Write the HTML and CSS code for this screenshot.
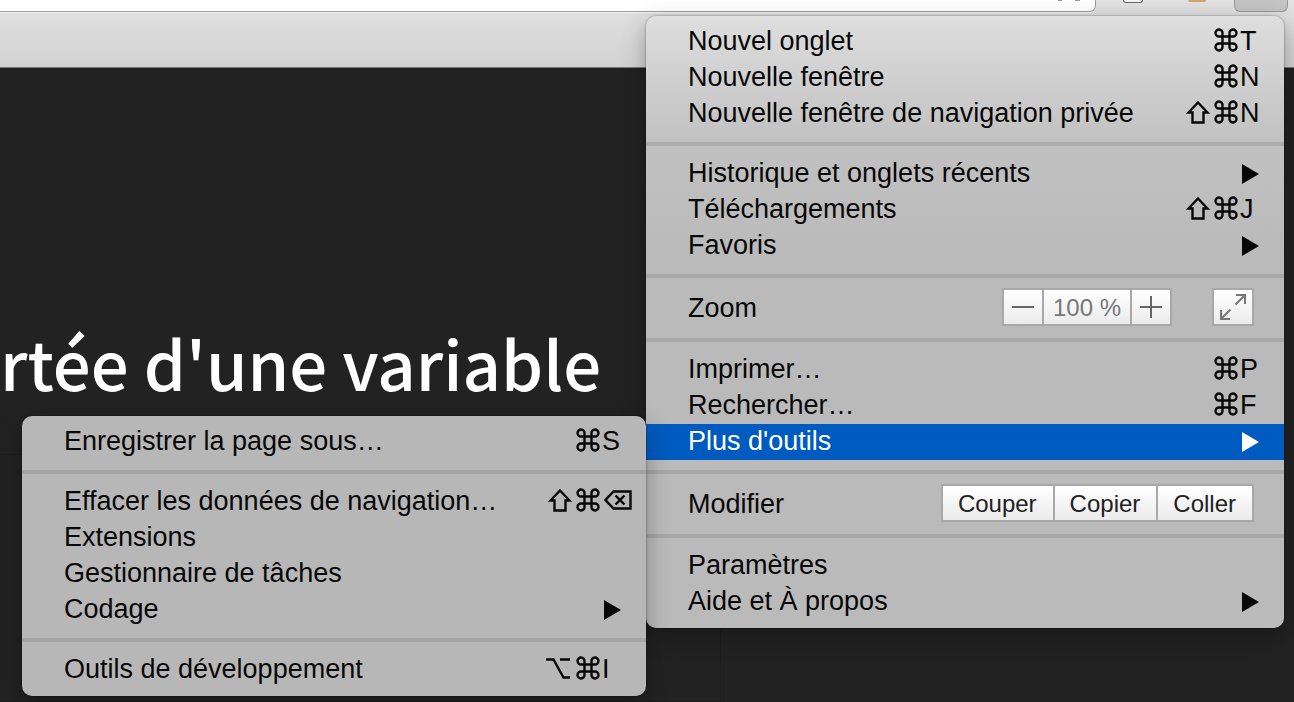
FILE: index.html
```html
<!DOCTYPE html>
<html lang="fr">
<head>
<meta charset="utf-8">
<title>Portée d'une variable</title>
<link rel="stylesheet" href="styles.css">
</head>
<body>
<svg class="defs" aria-hidden="true">
  <symbol id="cmd" viewBox="0 0 24 24"><path d="M8.500 8.500h7v7h-7zM8.500 8.500H5.200a3.500 3.500 0 1 1 3.300-3.300zM15.500 8.500V5.200a3.500 3.500 0 1 1 3.300 3.300zM15.500 15.500h3.300a3.500 3.500 0 1 1-3.300 3.300zM8.500 15.500v3.300a3.500 3.500 0 1 1-3.300-3.300z"/></symbol>
  <symbol id="shift" viewBox="0 0 24 24"><path d="M12 2.500 21.500 12.500H17.500V22.500H6.500V12.500H2.500z"/></symbol>
  <symbol id="option" viewBox="0 0 24 24"><path d="M0 3.500H7.500L17.500 21.500H24M14 3.500H24"/></symbol>
  <symbol id="erase" viewBox="0 0 28 24"><path d="M9.500 3.500H26.500V20.500H9.500L1.500 12zM11.500 7.500l9 9M20.500 7.500l-9 9"/></symbol>
  <symbol id="arrow" viewBox="0 0 17 20"><path d="M0 0 17 10 0 20z"/></symbol>
</svg>
<header class="toolbar">
  <div class="omnibox"><svg class="star" viewBox="0 0 28 4" aria-hidden="true"><path d="M1 0h4M18 0h5"/></svg></div>
  <div class="extensions">
    <span class="ext-box"></span>
    <span class="ext-dot"></span>
  </div>
  <button class="menu-button" aria-label="Menu"></button>

  <nav class="menu main-menu" aria-label="Menu principal">
    <ul class="section">
      <li><button class="item">Nouvel onglet<span class="keys"><svg class="icon" aria-label="Cmd"><use href="#cmd"/></svg><span class="key">T</span></span></button></li>
      <li><button class="item">Nouvelle fenêtre<span class="keys"><svg class="icon" aria-label="Cmd"><use href="#cmd"/></svg><span class="key">N</span></span></button></li>
      <li><button class="item">Nouvelle fenêtre de navigation privée<span class="keys"><svg class="icon" aria-label="Maj"><use href="#shift"/></svg><svg class="icon" aria-label="Cmd"><use href="#cmd"/></svg><span class="key">N</span></span></button></li>
    </ul>
    <ul class="section">
      <li><button class="item">Historique et onglets récents<svg class="arrow"><use href="#arrow"/></svg></button></li>
      <li><button class="item">Téléchargements<span class="keys"><svg class="icon" aria-label="Maj"><use href="#shift"/></svg><svg class="icon" aria-label="Cmd"><use href="#cmd"/></svg><span class="key">J</span></span></button></li>
      <li><button class="item">Favoris<svg class="arrow"><use href="#arrow"/></svg></button></li>
    </ul>
    <div class="section controls">
      <span class="label">Zoom</span>
      <div class="group">
        <button class="cell square" aria-label="Zoom arrière"><svg class="sign" viewBox="0 0 22 22"><path d="M0 11h22"/></svg></button>
        <output class="cell percent">100 %</output>
        <button class="cell square" aria-label="Zoom avant"><svg class="sign" viewBox="0 0 22 22"><path d="M0 11h22M11 0v22"/></svg></button>
      </div>
      <div class="group fullscreen">
        <button class="cell square" aria-label="Plein écran"><svg class="expand" viewBox="0 0 28 28"><path d="M17 2h9v9M26 2 16.500 11.500M2 17v9h9M2 26 11.500 16.500"/></svg></button>
      </div>
    </div>
    <ul class="section">
      <li><button class="item">Imprimer…<span class="keys"><svg class="icon" aria-label="Cmd"><use href="#cmd"/></svg><span class="key">P</span></span></button></li>
      <li><button class="item">Rechercher…<span class="keys"><svg class="icon" aria-label="Cmd"><use href="#cmd"/></svg><span class="key">F</span></span></button></li>
      <li class="parent"><button class="item selected" aria-expanded="true">Plus d'outils<svg class="arrow"><use href="#arrow"/></svg></button>
        <div class="menu submenu">
          <ul class="section">
            <li><button class="item">Enregistrer la page sous…<span class="keys"><svg class="icon" aria-label="Cmd"><use href="#cmd"/></svg><span class="key">S</span></span></button></li>
          </ul>
          <ul class="section">
            <li><button class="item">Effacer les données de navigation…<span class="keys"><svg class="icon" aria-label="Maj"><use href="#shift"/></svg><svg class="icon" aria-label="Cmd"><use href="#cmd"/></svg><span class="key erase"><svg class="icon wide" aria-label="Effacer"><use href="#erase"/></svg></span></span></button></li>
            <li><button class="item">Extensions</button></li>
            <li><button class="item">Gestionnaire de tâches</button></li>
            <li><button class="item">Codage<svg class="arrow"><use href="#arrow"/></svg></button></li>
          </ul>
          <ul class="section">
            <li><button class="item">Outils de développement<span class="keys"><svg class="icon option" aria-label="Option"><use href="#option"/></svg><svg class="icon" aria-label="Cmd"><use href="#cmd"/></svg><span class="key">I</span></span></button></li>
          </ul>
        </div>
      </li>
    </ul>
    <div class="section controls">
      <span class="label">Modifier</span>
      <div class="group">
        <button class="cell text">Couper</button>
        <button class="cell text">Copier</button>
        <button class="cell text">Coller</button>
      </div>
    </div>
    <ul class="section">
      <li><button class="item">Paramètres</button></li>
      <li><button class="item">Aide et À propos<svg class="arrow"><use href="#arrow"/></svg></button></li>
    </ul>
  </nav>
</header>
<main class="page">
  <h1 class="title">rtée d'une variable</h1>
  <div class="panel"></div>
</main>
</body>
</html>
```
FILE: styles.css
```css
* {
  box-sizing: border-box;
}

body {
  margin: 0;
  min-height: 100vh;
  display: flex;
  flex-direction: column;
  overflow: hidden;
  background: #222;
  font-family: "Liberation Sans", Arial, sans-serif;
}

button {
  border: 0;
  margin: 0;
  padding: 0;
  background: none;
  color: inherit;
  font: inherit;
}

ul {
  list-style: none;
  margin: 0;
  padding: 0;
}

.defs {
  position: absolute;
  width: 0;
  height: 0;
}

/* Browser toolbar */
.toolbar {
  position: relative;
  z-index: 1;
  display: flex;
  align-items: flex-start;
  height: 68px;
  padding-right: 6px;
  background: linear-gradient(#e2e2e2, #d2d2d2);
  border-bottom: 1px solid #777;
}

.omnibox {
  flex: 1;
  display: flex;
  justify-content: flex-end;
  height: 12px;
  padding-right: 10px;
  background: #fff;
  border: 1px solid #9b9b9b;
  border-width: 0 1px 1px 0;
  border-bottom-right-radius: 6px;
  box-shadow: 0 1px #f2f2f2;
}

.star {
  width: 28px;
  height: 4px;
  stroke: #999;
  stroke-width: 2;
}

.extensions {
  display: flex;
  gap: 45px;
  width: 138px;
  padding-left: 27px;
}

.ext-box {
  width: 20px;
  height: 3px;
  border: 1px solid #666;
  border-top: 0;
  border-radius: 0 0 4px 4px;
  background: #f5f5f5;
}

.ext-dot {
  width: 18px;
  height: 2px;
  border-radius: 0 0 9px 9px;
  background: #d6a468;
}

.menu-button {
  width: 54px;
  height: 12px;
  background: #c4c4c4;
  border: 1px solid #999;
  border-top: 0;
  border-radius: 0 0 6px 6px;
}

/* Page */
.page {
  flex: 1;
  display: flex;
  flex-direction: column;
}

.title {
  margin: 0;
  padding-top: 242px;
  color: #fff;
  font-family: "Noto Sans CJK SC", sans-serif;
  font-size: 67px;
  font-weight: 500;
  line-height: 104px;
  white-space: nowrap;
}

.panel {
  flex: 1;
  width: 721px;
  margin-top: 40px;
  border: 1px solid #1d1d1d;
  border-left: 0;
}

/* Menus */
.menu {
  position: absolute;
  border-radius: 10px;
  color: #080808;
  font-size: 27px;
  line-height: 36px;
  box-shadow: 0 0 2px rgba(0, 0, 0, 0.5), 0 8px 24px rgba(0, 0, 0, 0.3);
}

.main-menu {
  top: 16px;
  right: 10px;
  width: 638px;
  background: linear-gradient(#dedede, #c1c1c1 126px, #bababa 240px);
}

.submenu {
  top: -8px;
  right: 100%;
  width: 624px;
  background: #b7b7b7;
}

.section {
  padding: 10px 0;
  border-bottom: 4px solid rgba(0, 0, 0, 0.1);
}

.section:first-child {
  padding-top: 8px;
}

.section:last-child {
  padding-bottom: 8px;
  border-bottom: 0;
}

.parent {
  position: relative;
}

.item {
  display: flex;
  align-items: center;
  justify-content: space-between;
  width: 100%;
  height: 36px;
  padding: 0 0 2px 42px;
  text-align: left;
  white-space: nowrap;
}

.selected {
  background: #005bc0;
  color: #fff;
}

.keys {
  display: flex;
  align-items: center;
}

.key {
  width: 44px;
}

.key.erase {
  display: flex;
  padding-left: 2px;
}

.icon {
  width: 24px;
  height: 24px;
  margin: 0 2px 2px;
  fill: none;
  stroke: currentColor;
  stroke-width: 2.4;
}

.icon:nth-last-child(2) {
  margin-right: 2px;
}

.icon.wide {
  width: 28px;
  margin: 0 0 2px;
}

.icon.option {
  margin-right: 4px;
}

.arrow {
  width: 17px;
  height: 20px;
  margin: 2px 25px 0 0;
  fill: currentColor;
}

/* Rows holding bordered buttons */
.controls {
  display: flex;
  align-items: center;
  padding: 10px 30px 12px 42px;
}

.label {
  flex: 1;
  padding-top: 2px;
}

.group {
  display: flex;
  gap: 2px;
  padding: 2px;
  background: #a8a8a8;
}

.fullscreen {
  margin-left: 40px;
}

.cell {
  display: flex;
  align-items: center;
  justify-content: center;
  height: 34px;
  padding-top: 2px;
  background: linear-gradient(#fff, #ebebeb);
  font-size: 24px;
}

.square {
  width: 38px;
  padding-top: 0;
}

.percent {
  width: 86px;
  color: #777;
}

.text {
  padding-right: 16px;
  padding-left: 15px;
  color: #222;
}

.sign {
  width: 22px;
  height: 22px;
  stroke: #666;
  stroke-width: 2;
}

.expand {
  width: 28px;
  height: 28px;
  fill: none;
  stroke: #777;
  stroke-width: 2;
}
```
